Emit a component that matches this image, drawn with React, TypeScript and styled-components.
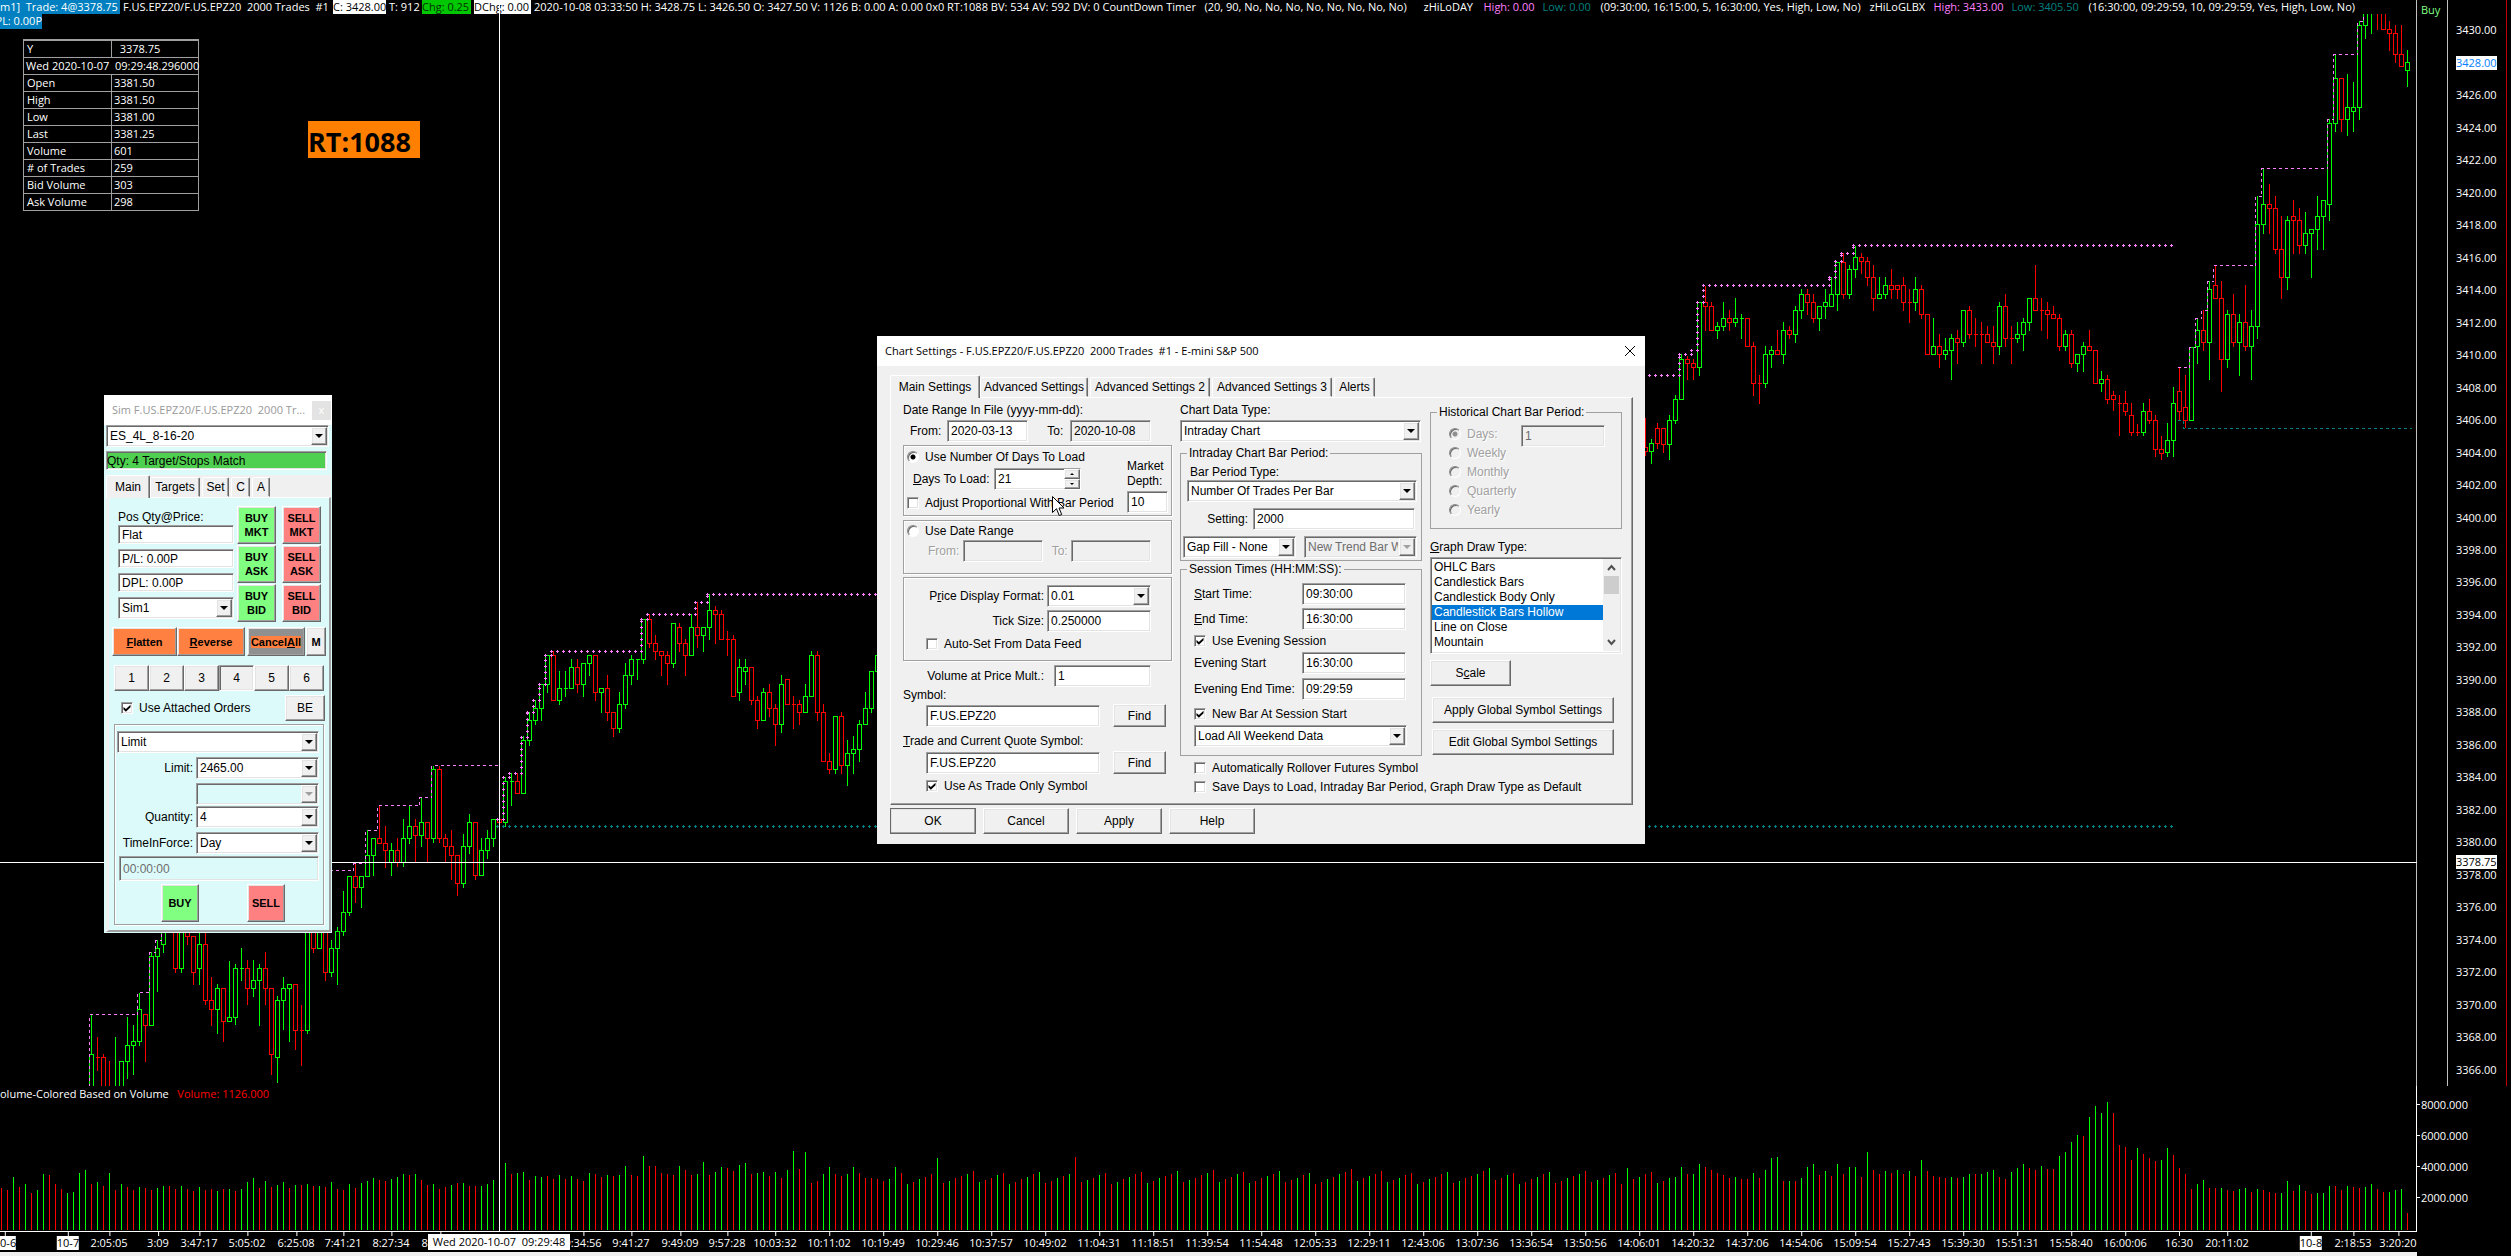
import React from "react";
import styled, { createGlobalStyle, css } from "styled-components";

const UI = `"Liberation Sans", Arial, sans-serif`;
const CHART = `"Open Sans", "Noto Sans", sans-serif`;

const GlobalStyle = createGlobalStyle`
  * { box-sizing: border-box; }
  body { margin: 0; background: #000; overflow: hidden; }
  button, input, select { font: inherit; color: inherit; margin: 0; border-radius: 0; }
`;

/* ---------- chart data ---------- */

const FIRST_X = 499;
const BAR = 6;
const xOf = (n: number) => FIRST_X + n * BAR;

type Segment = { start: number; y0: number; scale: number; rows: string };

/* direction, high, body top, body bottom, low */
const segments: Segment[] = [
  {
    start: -68, y0: 700, scale: 2.82,
    rows: `g 885 997 1110 1110|r 950 1008 1008 1042|r 997 1008 1110 1110|r 1018 1110 1110 1110|g 950 1110 1110 1110|g 1018 1018 1110 1110|g 895 974 1018 1066|g 917 962 974 1055|g 825 872 962 972|r 885 885 917 1018|g 712 723 917 917|g 678 700 723 822|g 640 640 689 712|g 500 520 640 650|r 500 600 757 768|g 600 630 757 766|r 600 620 665 688|r 665 665 768 800|g 640 689 757 800|r 640 689 847 858|r 780 847 872 917|g 800 813 872 938|r 813 813 906 961|g 735 895 906 906|g 745 757 895 915|g 700 757 757 790|r 733 757 813 858|g 733 790 813 835|g 745 757 790 917|r 712 757 813 858|r 813 813 997 1055|g 835 847 1008 1077|g 780 813 847 927|g 802 802 813 961|r 802 802 930 984|r 860 930 930 1028|g 620 630 930 938|r 600 600 700 710|g 600 640 700 700|r 600 620 768 790|g 678 700 768 778|g 640 652 700 800|g 540 597 652 662|g 495 495 597 606|r 460 495 528 570|g 495 495 528 583|g 368 436 495 495|g 390 390 436 494|r 297 390 402 402|r 355 402 424 470|g 402 424 458 494|r 390 424 458 468|g 335 390 458 468|g 297 356 390 402|r 335 356 380 458|g 275 345 380 412|r 345 345 390 458|g 185 195 390 400|r 185 195 390 400|r 378 390 413 456|r 366 413 436 504|r 436 436 517 550|g 378 413 517 526|g 321 345 413 432|r 345 345 494 504|g 390 424 494 494|g 366 390 424 446|g 335 335 390 412`,
  },
  {
    start: 0, y0: 580, scale: 3,
    rows: `r 716 716 727 727|g 592 604 727 738|g 580 604 604 674|r 580 604 640 640|g 468 481 640 640|g 397 421 481 494|g 361 385 421 431|g 313 313 385 420|g 226 226 313 336|r 214 226 361 361|g 273 325 361 372|g 273 325 325 348|g 237 262 325 325|r 237 262 313 336|g 250 250 313 348|g 226 226 250 285|r 226 226 337 360|g 325 325 337 396|r 285 325 397 420|r 397 397 445 468|g 336 373 445 456|g 249 286 373 384|g 225 238 286 312|g 238 238 238 297|g 118 118 238 249|r 102 118 190 201|r 165 190 214 237|r 214 214 226 285|r 213 226 250 312|g 130 130 250 261|r 129 142 190 213|r 177 190 226 285|g 103 142 226 226|r 67 142 166 201|g 142 142 166 213|g 42 91 142 177|r 78 91 103 189|r 90 103 178 178|r 153 178 178 225|r 165 178 349 349|g 237 262 337 360|g 237 262 274 312|r 262 262 361 372|r 348 361 421 444|g 324 337 421 421|r 312 337 385 408|r 372 385 433 495|g 285 313 433 456|r 298 298 373 373|r 348 373 373 444|r 360 373 397 432|g 312 349 397 397|g 213 226 349 349|r 213 226 397 420|r 372 397 544 544|r 519 544 568 579|g 409 409 568 579|r 396 409 556 579|g 480 520 556 615|g 468 508 520 579|g 420 433 508 543|g 336 385 433 433|g 274 274 385 396|g 226 226 274 274`,
  },
  {
    start: 191, y0: 0, scale: 3,
    rows: `r 1255 1340 1354 1364|g 1318 1330 1354 1390|r 1270 1285 1330 1345|r 1285 1285 1333 1356|g 1244 1261 1333 1378|g 1186 1198 1261 1270|g 1063 1078 1198 1198|r 1068 1078 1090 1137|r 1078 1090 1102 1137|g 907 907 1102 1125|r 857 907 919 990|r 907 919 991 991|g 967 979 991 1014|g 907 955 979 990|r 930 955 967 990|g 893 955 967 978|g 942 955 955 1014|r 955 955 1039 1039|r 1026 1039 1150 1185|r 1125 1150 1150 1209|g 1038 1063 1150 1161|g 1038 1051 1063 1102|r 990 1051 1063 1063|g 966 991 1063 1089|r 979 991 1003 1014|g 919 931 1003 1026|g 867 883 931 954|r 867 883 907 942|r 883 907 955 966|g 919 919 955 990|g 867 907 919 954|g 832 883 919 919|g 785 785 883 930|r 760 785 883 893|g 795 808 883 893|g 737 772 808 832|r 758 772 784 820|r 772 784 832 856|r 795 832 895 930|g 832 883 895 895|g 832 856 883 893|r 807 856 868 893|r 856 856 868 893|r 832 856 907 930|r 867 907 907 966|g 832 868 907 930|r 855 868 943 954|r 943 943 1063 1063|g 954 1039 1063 1063|r 1002 1039 1063 1101|g 1014 1051 1063 1077|g 1002 1015 1051 1137|r 990 1015 1027 1089|g 931 931 1027 1038|r 918 931 1003 1014|r 954 1003 1003 1038|r 966 1003 1003 1089|r 978 1003 1027 1027|r 978 1027 1039 1089|g 907 919 1039 1062|r 882 919 1015 1038|r 978 1015 1015 1089|g 966 1003 1015 1026|g 955 967 1003 1050|g 895 895 967 990|r 795 895 931 931|r 895 931 931 990|r 907 931 943 1014|r 919 943 955 955|r 942 955 1039 1050|g 990 1003 1039 1050|r 990 1003 1090 1101|g 1063 1063 1090 1113|g 1026 1039 1063 1113|r 990 1039 1051 1051|r 1051 1051 1150 1150|g 1113 1138 1150 1173|r 1125 1138 1198 1209|r 1173 1186 1198 1231|r 1185 1210 1210 1306|r 1173 1210 1234 1244|r 1209 1246 1297 1306|r 1272 1297 1297 1306|g 1209 1233 1297 1306|r 1197 1233 1260 1269|r 1244 1260 1346 1369|r 1308 1346 1359 1377|g 1270 1321 1357 1369|g 1161 1210 1321 1367|r 1103 1174 1234 1259|r 1125 1222 1260 1282|g 1040 1040 1260 1260|g 955 991 1039 1089|r 931 991 1027 1050|g 844 868 1027 1137|r 797 856 895 895|r 844 895 1078 1173|g 930 943 1078 1101|r 882 943 1027 1038|g 942 967 1027 1125|r 855 967 1039 1050|g 930 979 1039 1137|g 588 673 979 1014|g 505 613 673 698|r 552 613 625 698|r 588 625 748 758|r 649 748 832 893|g 648 661 832 867|r 600 649 661 758|r 625 661 736 758|g 637 700 736 758|g 688 688 700 830|g 588 649 688 747|g 600 601 649 747|g 357 370 613 660|g 163 235 370 393|r 235 235 358 393|g 222 322 358 405|g 246 322 334 393|g 64 76 322 357|g 40 40 76 113|g 30 30 36 98|r 30 30 36 87|r 30 30 88 88|r 63 88 100 150|r 75 100 163 186|r 75 163 199 199|g 150 187 211 258`,
  },
];

const paths = (() => {
  const out: Record<string, string> = { g: "", r: "" };
  segments.forEach(({ start, y0, scale, rows }) =>
    rows.split("|").forEach((row, i) => {
      const [dir, ...v] = row.split(" ");
      const [hi, top, bottom, low] = v.map((n) => Math.round(y0 + Number(n) / scale));
      const x = xOf(start + i);
      out[dir] += `M${x + 0.5} ${hi}V${top}M${x + 0.5} ${bottom}V${low + 1}`;
      out[dir] += `M${x - 1.5} ${top + 0.5}H${x + 2.5}V${bottom + 0.5}H${x - 1.5}Z`;
    })
  );
  return out;
})();

type Step = [number, number];
const dayHigh: Step[] = [
  [0, 819], [1, 777], [2, 773], [4, 737], [5, 712], [6, 700], [7, 684], [8, 655], [9, 651],
  [24, 619], [25, 614], [33, 602], [35, 594], [100, 500], [150, 375], [197, 354], [199, 350],
  [200, 302], [201, 285], [222, 277], [223, 261], [224, 253], [226, 245], [279, 245],
];
const dayLow: Step[] = [[0, 826], [279, 826]];
const nightHighLeft: Step[] = [
  [-68, 1086], [-68, 1014], [-60, 992], [-58, 952], [-57, 940], [-56, 900], [-50, 870],
  [-24, 863], [-22, 830], [-20, 805], [-13, 797], [-11, 765], [0, 765],
];
const nightHighRight: Step[] = [
  [280, 367], [282, 347], [283, 318], [284, 310], [285, 281], [286, 265], [293, 196],
  [294, 168], [305, 119], [306, 54], [310, 21], [311, 14],
];
const nightLow: Step[] = [[280, 420], [281, 428], [319, 428]];

const stairs = (steps: Step[]) =>
  steps.map(([n, y], i) => `${i ? "H" : "M"}${xOf(n) - 1.5}${i ? "V" : " "}${y + 0.5}`).join("");

const crosses = (steps: Step[]) => {
  let d = "";
  const add = (x: number, y: number) => {
    d += `M${x - 1} ${y + 0.5}h3M${x + 0.5} ${y - 1}v3`;
  };
  steps.forEach(([n, y], i) => {
    add(xOf(n) - 2, y);
    const next = steps[i + 1];
    if (!next) return;
    for (let k = n + 1; k <= next[0]; k++) add(xOf(k) - 2, y);
    for (let v = y - BAR; v > next[1]; v -= BAR) add(xOf(next[0]) - 2, v);
  });
  return d;
};

const volLeft = "r1377 r1382 g1345 r1373 g1365 r1390 g1382 g1337 r1340 r1365 r1380 g1390 g1388 g1334 g1326 r1366 g1359 r1371 g1334 r1382 g1364 r1373 r1382 g1373 r1376 r1382 g1376 g1371 r1372 r1378 g1371 r1380 r1385 g1373 r1382 r1379 g1385 r1380 g1379 r1385 g1380 g1359 g1348 r1376 g1356 r1373 g1368 g1359 r1376 g1368 r1368 g1366 r1371 g1371 r1373 g1359 r1380 r1382 g1365 r1377 g1362 g1356 g1348 r1354 r1356 g1351 g1345 g1337 r1340 g1338 r1354 r1368 g1365 r1380 r1373 g1368 r1362 g1362 r1371 r1371 g1371 g1366 g1354 r1354 g1306 r1337 g1334 g1331 r1354 g1342 g1345 r1342 r1351 g1340 r1351 g1342 r1351 r1356 g1334 r1337 r1345 g1340 r1342 g1340 g1314 r1340 r1342 g1286 r1314 r1314 r1334 r1337 r1340 g1314 r1325 r1340 g1337 g1303 r1340 g1331 g1317 r1320 r1328 g1312 g1306 r1337 g1334 g1331 r1342 g1331 r1348 g1325 g1272 r1323 g1275 r1362 r1356 g1337 g1317 r1337 r1342 g1337 g1317 r1334 r1348 r1348 r1351 r1356 g1351 g1317".split(" ");
const volRight = "r1430 g1423 g1421 g1403 r1417 g1416 g1399 r1403 r1409 r1414 r1418 r1423 g1421 r1425 r1425 g1414 r1423 g1409 g1388 g1385 r1430 g1429 r1429 g1423 g1403 g1399 r1418 g1410 r1420 g1399 r1416 g1403 g1403 r1421 g1376 r1409 r1416 g1410 r1414 g1409 r1416 g1410 r1420 g1390 r1410 r1420 r1421 r1423 g1421 r1423 g1421 g1416 r1416 g1416 g1412 g1409 r1421 r1425 g1412 g1405 g1398 r1405 r1409 g1401 r1408 r1407 g1383 g1377 g1357 g1345 r1346 g1312 g1291 g1304 g1284 r1304 r1363 r1367 r1390 g1368 r1379 r1388 r1392 g1390 g1368 r1381 r1405 r1416 r1443 g1434 g1427 r1442 r1442 g1442 r1445 r1447 g1443 g1442 r1449 g1443 r1445 r1449 r1451 g1451 g1429 r1447 g1436 r1447 r1453 g1451 g1451 g1438 r1438 r1445 g1438 r1440 r1442 g1440 g1434 r1443 r1449 g1449 g1445 g1443 r1487".split(" ");

const volume = (() => {
  const out: Record<string, string> = { g: "", r: "" };
  const put = (dir: string, n: number, h: number) => {
    out[dir] += `M${xOf(n) + 0.5} 144v${-Math.round(h)}`;
  };
  volLeft.forEach((s, i) => put(s[0], i - 83, (1495 - Number(s.slice(1))) / 2.82));
  for (let n = -83 + volLeft.length; n < 194; n++) {
    const wave = (n * 37) % 17;
    const spike = n % 23 === 4 ? 14 : 0;
    put((n * 7) % 5 < 2 ? "g" : "r", n, 46 + wave * 0.8 + spike);
  }
  volRight.forEach((s, i) => put(s[0], 194 + i, (1519 - Number(s.slice(1))) / 1.832));
  return out;
})();

const PLOT_W = 2417;
const times: [number, string, boolean?][] = [
  [5, "10-6", true], [68, "10-7", true], [109, "2:05:05"], [158, "3:09"], [199, "3:47:17"],
  [247, "5:05:02"], [296, "6:25:08"], [343, "7:41:21"], [391, "8:27:34"], [440, "8:59:12"],
  [583, "9:34:56"], [631, "9:41:27"], [680, "9:49:09"], [727, "9:57:28"],
  [775, "10:03:32"], [829, "10:11:02"], [883, "10:19:49"], [937, "10:29:46"],
  [991, "10:37:57"], [1045, "10:49:02"], [1099, "11:04:31"], [1153, "11:18:51"],
  [1207, "11:39:54"], [1261, "11:54:48"], [1315, "12:05:33"], [1369, "12:29:11"],
  [1423, "12:43:06"], [1477, "13:07:36"], [1531, "13:36:54"], [1585, "13:50:56"],
  [1639, "14:06:01"], [1693, "14:20:32"], [1747, "14:37:06"], [1801, "14:54:06"],
  [1855, "15:09:54"], [1909, "15:27:43"], [1963, "15:39:30"], [2017, "15:51:31"],
  [2071, "15:58:40"], [2125, "16:00:06"], [2179, "16:30"], [2227, "20:11:02"],
  [2311, "10-8", true], [2353, "2:18:53"], [2398, "3:20:20"],
];

const prices = Array.from({ length: 33 }, (_, i) => 3430 - i * 2);

/* ---------- chart layout ---------- */

const Desktop = styled.main`
  position: relative;
  display: grid;
  grid-template-columns: minmax(0, 1fr) 31px 63px;
  grid-template-rows: minmax(0, 1fr) 145px 25px;
  height: 100vh;
  background: #000;
  color: #fff;
  font: 11px/14px ${CHART};
  overflow: hidden;
`;
const PricePane = styled.section`
  display: flex;
  flex-direction: column;
  min-width: 0;
  min-height: 0;
  border-right: 1px solid #c0c0c0;
`;
const Plot = styled.svg`
  display: block;
  width: 100%;
  height: 0;
  flex: 1;
  shape-rendering: crispEdges;
  fill: none;
`;
const VolumePlot = styled(Plot)`
  height: 100%;
`;
const StatusBar = styled.header`
  display: flex;
  gap: 3px;
  height: 14px;
  overflow: hidden;
  white-space: pre;
`;
const Tag = styled.span<{ $bg?: string; $fg?: string; $w?: number }>`
  flex: none;
  background: ${(p) => p.$bg || "transparent"};
  color: ${(p) => p.$fg || "#fff"};
  ${(p) => p.$w && `width: ${p.$w}px;`}
`;
const Profit = styled.div`
  position: absolute;
  top: 14px;
  left: 0;
  width: 42px;
  height: 15px;
  overflow: hidden;
  background: #0080c0;
  direction: rtl;
  white-space: nowrap;
`;
const BuyColumn = styled.div`
  padding: 3px 4px;
  border-right: 1px solid #c0c0c0;
  color: #80ff80;
`;
const PriceScale = styled.ol`
  display: flex;
  flex-direction: column;
  margin: 0 4px 0 0;
  padding: 14px 0 0 8px;
  border-right: 1px solid #c00000;
  list-style: none;
`;
const Price = styled.li<{ $last?: boolean }>`
  display: flex;
  flex: 1;
  align-items: center;
  span {
    background: ${(p) => (p.$last ? "#fff" : "transparent")};
    color: ${(p) => (p.$last ? "#0080ff" : "#fff")};
  }
`;
const VolumePane = styled.section`
  position: relative;
  display: flex;
  min-width: 0;
  border-right: 1px solid #fff;
`;
const VolumeTitle = styled.div`
  position: absolute;
  top: 1px;
  left: 0;
  white-space: pre;
  span { color: #f00; }
`;
const VolumeScale = styled.ol`
  grid-column: 2 / 4;
  margin: 0;
  padding: 3px 0 0;
  list-style: none;
  li { display: flex; align-items: center; height: 31px; }
  li::before { content: ""; width: 3px; height: 1px; margin-right: 1px; background: #fff; }
`;
const TimeAxis = styled.div`
  position: relative;
  grid-column: 1;
  overflow: hidden;
  border-top: 1px solid #fff;
  border-bottom: 4px solid #f0f0f0;
`;
const Time = styled.span<{ $day?: boolean }>`
  position: absolute;
  top: 4px;
  transform: translateX(-50%);
  white-space: nowrap;
  background: ${(p) => (p.$day ? "#fff" : "transparent")};
  color: ${(p) => (p.$day ? "#000" : "#fff")};
  &::before {
    content: "";
    position: absolute;
    left: 50%;
    top: -4px;
    width: 1px;
    height: 4px;
    background: #fff;
  }
`;
const CursorTime = styled.div`
  position: absolute;
  left: 428px;
  bottom: 6px;
  width: 142px;
  height: 16px;
  line-height: 16px;
  text-align: center;
  white-space: pre;
  background: #fff;
  color: #000;
`;
const CursorPrice = styled.div`
  position: absolute;
  left: calc(100% - 55px);
  top: 855px;
  background: #fff;
  color: #000;
`;
const CrossV = styled.div`
  position: absolute;
  left: 499px;
  top: 0;
  bottom: 24px;
  width: 1px;
  background: #fff;
`;
const CrossH = styled.div`
  position: absolute;
  left: 0;
  right: 94px;
  top: 862px;
  height: 1px;
  background: #fff;
`;
const DataTable = styled.table`
  position: absolute;
  left: 23px;
  top: 39px;
  width: 176px;
  table-layout: fixed;
  border-collapse: collapse;
  border: 1px solid #fff;
  border-top: 2px solid #a0a0a0;
  td, th {
    height: 17px;
    padding: 0 2px;
    border: 1px solid #a0a0a0;
    font-weight: 400;
    text-align: left;
    white-space: pre;
    line-height: 14px;
  }
  td[colspan] { padding-right: 0; }
  th { width: 88px; padding-left: 3px; }
`;
const RtBadge = styled.div`
  position: absolute;
  left: 308px;
  top: 121px;
  width: 112px;
  height: 37px;
  background: #ff8000;
  color: #000;
  font-size: 27px;
  font-weight: 700;
  line-height: 41px;
`;

/* ---------- classic window controls ---------- */

const sunken = css`
  border: 1px solid;
  border-color: #a0a0a0 #fff #fff #a0a0a0;
  box-shadow: inset 1px 1px #696969, inset -1px -1px #e3e3e3;
`;
const raised = css`
  border: 1px solid;
  border-color: #fff #696969 #696969 #fff;
  box-shadow: inset -1px -1px #a0a0a0, inset 1px 1px #e3e3e3;
`;
const etched = css`
  border: 1px solid #a0a0a0;
  box-shadow: 1px 1px 0 #fff, inset 1px 1px 0 #fff;
`;

const Box = styled.input<{ $w: number; $h?: number }>`
  ${sunken}
  flex: none;
  display: block;
  width: ${(p) => p.$w}px;
  height: ${(p) => p.$h || 22}px;
  padding: 0 3px;
  background: #fff;
  color: #000;
  outline: none;
  &:disabled, &:read-only { background: transparent; }
  &:disabled { color: #6d6d6d; }
`;
const ComboWrap = styled.span<{ $w: number; $off?: boolean }>`
  ${sunken}
  position: relative;
  flex: none;
  display: block;
  width: ${(p) => p.$w}px;
  height: 22px;
  background: ${(p) => (p.$off ? "transparent" : "#fff")};
  select {
    appearance: none;
    display: block;
    width: calc(100% - 18px);
    height: 20px;
    padding: 0 0 0 3px;
    border: 0;
    outline: none;
    background: transparent;
    color: ${(p) => (p.$off ? "#6d6d6d" : "#000")};
    opacity: 1;
    overflow: hidden;
  }
`;
const DropKnob = styled.span<{ $off?: boolean }>`
  ${raised}
  position: absolute;
  right: 1px;
  top: 1px;
  width: 16px;
  height: 18px;
  background: #f0f0f0;
  pointer-events: none;
  &::after {
    content: "";
    position: absolute;
    left: 3px;
    top: 6px;
    border: 4px solid transparent;
    border-top: 4px solid ${(p) => (p.$off ? "#a0a0a0" : "#000")};
    border-bottom: 0;
  }
`;
const Combo = ({ w, value, label, off }: { w: number; value: string; label: string; off?: boolean }) => (
  <ComboWrap $w={w} $off={off}>
    <select aria-label={label} disabled={off} defaultValue={value}>
      <option>{value}</option>
    </select>
    <DropKnob $off={off} />
  </ComboWrap>
);

const Button = styled.button<{ $w: number; $h?: number; $bg?: string; $bold?: boolean; $down?: boolean; $main?: boolean }>`
  ${raised}
  flex: none;
  display: block;
  width: ${(p) => p.$w}px;
  height: ${(p) => p.$h || 26}px;
  padding: 0;
  background: ${(p) => p.$bg || "#f0f0f0"};
  color: #000;
  white-space: nowrap;
  ${(p) => p.$bold && "font-size: 11px; font-weight: 700; line-height: 14px;"}
  ${(p) => p.$down && sunken}
  ${(p) => p.$main && "outline: 1px solid #696969; outline-offset: -1px;"}
`;
const TickLabel = styled.label<{ $off?: boolean }>`
  display: flex;
  align-items: center;
  gap: 6px;
  height: 16px;
  white-space: nowrap;
  ${(p) => p.$off && "color: #a0a0a0; text-shadow: 1px 1px #fff;"}
`;
const CheckInput = styled.input`
  ${sunken}
  appearance: none;
  position: relative;
  width: 12px;
  height: 12px;
  background: #fff;
  &:checked::after {
    content: "";
    position: absolute;
    inset: 1px;
    background: #000;
    clip-path: polygon(6% 36%, 36% 62%, 94% 8%, 94% 42%, 36% 96%, 6% 68%);
  }
`;
const RadioInput = styled.input`
  appearance: none;
  width: 12px;
  height: 12px;
  border: 1px solid;
  border-color: #8a8a8a #fff #fff #8a8a8a;
  border-radius: 50%;
  box-shadow: inset 1px 1px #696969;
  background: #fff;
  &:checked { background: radial-gradient(#000 2px, #fff 3px); }
  &:disabled { background: #f0f0f0; }
  &:disabled:checked { background: radial-gradient(#909090 2px, #f0f0f0 3px); }
`;
const Check = ({ text, on }: { text: string; on?: boolean }) => (
  <TickLabel>
    <CheckInput type="checkbox" defaultChecked={on} />
    {text}
  </TickLabel>
);
const Radio = ({ text, on, off, name }: { text: string; on?: boolean; off?: boolean; name: string }) => (
  <TickLabel $off={off}>
    <RadioInput type="radio" name={name} defaultChecked={on} disabled={off} />
    {text}
  </TickLabel>
);

const Row = styled.div<{ $mt?: number; $pl?: number; $gap?: number }>`
  display: flex;
  align-items: center;
  gap: ${(p) => p.$gap || 0}px;
  margin-top: ${(p) => p.$mt || 0}px;
  padding-left: ${(p) => p.$pl || 0}px;
`;
const Caption = styled.label<{ $w?: number; $end?: boolean; $off?: boolean }>`
  flex: none;
  display: block;
  line-height: 16px;
  white-space: nowrap;
  ${(p) => p.$w && `width: ${p.$w}px;`}
  ${(p) => p.$end && "text-align: right;"}
  ${(p) => p.$off && "color: #a0a0a0; text-shadow: 1px 1px #fff;"}
`;
const Group = styled.div<{ $h: number; $mt?: number; $pt?: number }>`
  ${etched}
  height: ${(p) => p.$h}px;
  margin-top: ${(p) => p.$mt || 0}px;
  padding-top: ${(p) => p.$pt || 0}px;
`;
const FieldSet = styled.fieldset<{ $h: number; $mt: number }>`
  min-width: 0;
  height: ${(p) => p.$h}px;
  margin: ${(p) => p.$mt}px 0 0;
  padding: 0;
  border: 1px solid #a0a0a0;
  legend { margin-left: 6px; padding: 0 2px; line-height: 16px; }
`;
const Tabs = styled.div`
  display: flex;
  align-items: flex-end;
  gap: 2px;
`;
const Tab = styled.button<{ $w: number; $active?: boolean }>`
  width: ${(p) => p.$w}px;
  height: 20px;
  padding: 0;
  border: 1px solid;
  border-color: #fff #696969 transparent #fff;
  border-radius: 2px 2px 0 0;
  box-shadow: inset -1px 0 #a0a0a0;
  background: #f0f0f0;
  white-space: nowrap;
  ${(p) => p.$active && "position: relative; margin-bottom: -1px; margin-right: -2px; height: 23px; border-bottom: 0;"}
`;

/* ---------- chart settings dialog ---------- */

const Dialog = styled.section`
  position: absolute;
  left: 877px;
  top: 336px;
  width: 768px;
  background: #f0f0f0;
  color: #000;
  font: 12px/16px ${UI};
`;
const DialogTitle = styled.header`
  display: flex;
  align-items: center;
  justify-content: space-between;
  height: 30px;
  padding: 0 8px;
  background: #fff;
  font: 11px/16px ${CHART};
  white-space: pre;
`;
const CloseButton = styled.button`
  display: flex;
  padding: 0;
  border: 0;
  background: none;
`;
const DialogBody = styled.div`
  padding: 9px 12px 10px 13px;
`;
const TabPanel = styled.div`
  display: grid;
  grid-template-columns: 269px 242px 192px;
  column-gap: 8px;
  height: 408px;
  padding: 4px 9px 0 12px;
  border: 1px solid;
  border-color: #fff #696969 #696969 #fff;
  box-shadow: inset -1px -1px #a0a0a0;
`;
const Column = styled.div`
  min-width: 0;
`;
const Split = styled.div`
  display: flex;
`;
const DaysBlock = styled.div`
  width: 223px;
  padding-left: 3px;
`;
const Depth = styled.label`
  padding-top: 10px;
  line-height: 15px;
  input { margin-top: 2px; }
`;
const Spin = styled.span`
  position: relative;
  display: block;
`;
const SpinKnobs = styled.span`
  position: absolute;
  right: 1px;
  top: 1px;
  display: grid;
`;
const SpinButton = styled.button<{ $down?: boolean }>`
  ${raised}
  position: relative;
  width: 16px;
  height: 10px;
  padding: 0;
  background: #f0f0f0;
  &::after {
    content: "";
    position: absolute;
    left: 5px;
    top: 3px;
    border: 2px solid transparent;
    ${(p) => (p.$down ? "border-top-color: #000; border-bottom: 0;" : "border-bottom-color: #000; border-top: 0;")}
  }
`;
const ListFrame = styled.div`
  ${sunken}
  display: flex;
  height: 97px;
  margin-top: 2px;
  padding: 1px 1px 2px 1px;
  background: #fff;
  select {
    flex: 1;
    height: 93px;
    padding: 1px 0 0;
    border: 0;
    outline: 0;
    overflow: hidden;
    background: #fff;
    scrollbar-width: none;
  }
  option { min-height: 0; height: 15px; padding: 0 2px; line-height: 15px; }
  option:checked { background: #0078d7 linear-gradient(#0078d7, #0078d7); color: #fff; }
`;
const ScrollTrack = styled.div`
  display: flex;
  flex-direction: column;
  align-items: center;
  width: 17px;
  background: #f0f0f0;
  svg { height: 17px; }
  svg:last-child { margin-top: auto; }
  i { width: 15px; height: 18px; background: #cdcdcd; }
`;
const History = styled.div`
  display: flex;
  justify-content: space-between;
  padding: 5px 16px 0 18px;
`;
const RadioStack = styled.div`
  display: grid;
  gap: 3px;
  padding-top: 1px;
`;
const Pointer = styled.svg`
  position: absolute;
  left: 175px;
  top: 160px;
`;

/* ---------- trade window ---------- */

const CYAN = "#dcfafa";
const TradeWindow = styled.section`
  position: absolute;
  left: 104px;
  top: 395px;
  width: 228px;
  background: ${CYAN};
  color: #000;
  font: 12px/16px ${UI};
`;
const TradeTitle = styled.header`
  display: flex;
  align-items: center;
  justify-content: space-between;
  height: 30px;
  padding: 0 1px 0 8px;
  background: #fff;
  color: #999;
  font: 11px/16px ${CHART};
  white-space: pre;
  button {
    width: 19px;
    height: 19px;
    padding: 0;
    border: 0;
    background: #e3e3e3;
    color: #fff;
  }
`;
const TradeBody = styled.div`
  padding: 0 1px 1px 2px;
`;
const MatchBar = styled.div`
  ${sunken}
  width: 221px;
  height: 19px;
  margin: 4px 0 5px;
  background: #50d050;
  line-height: 18px;
`;
const TabStrip = styled(Tabs)`
  height: 22px;
  background: #f0f0f0;
`;
const TradePanel = styled.div`
  padding: 8px 0 5px 3px;
  border: solid;
  border-width: 1px 2px 2px 3px;
  border-color: #fff #a0a0a0 #a0a0a0 #f0f0f0;
`;
const Quotes = styled.div`
  display: grid;
  grid-template-columns: 116px 39px 39px;
  column-gap: 3px;
  padding: 0 0 0 6px;
`;
const QuoteFields = styled.div`
  display: grid;
  align-content: start;
  gap: 5px;
  padding-top: 3px;
  > label { margin-bottom: -5px; }
`;
const ButtonStack = styled.div<{ $pl?: number }>`
  display: grid;
  gap: 1px;
  padding-left: ${(p) => p.$pl || 0}px;
  align-content: start;
`;
const Spread = styled.div`
  display: flex;
  align-items: center;
  justify-content: space-between;
  width: 213px;
  margin: 4px 0 3px;
  padding-left: 9px;
`;
const OrderBox = styled(Group)`
  width: 210px;
  margin-left: 2px;
`;

const GREEN = "#80ff80";
const PINK = "#ff8080";
const ORANGE = "#ff8040";

const quotes = [
  ["Y", "  3378.75"],
  null,
  ["Open", "3381.50"],
  ["High", "3381.50"],
  ["Low", "3381.00"],
  ["Last", "3381.25"],
  ["Volume", "601"],
  ["# of Trades", "259"],
  ["Bid Volume", "303"],
  ["Ask Volume", "298"],
];

function Chart() {
  return (
    <>
      <PricePane>
        <StatusBar>
          <Tag $bg="#0080c0" $w={120}>{"m1]  Trade: 4@3378.75"}</Tag>
          <Tag $w={207}>{"F.US.EPZ20/F.US.EPZ20  2000 Trades  #1"}</Tag>
          <Tag $bg="#fff" $fg="#000" $w={53}>C: 3428.00</Tag>
          <Tag $w={30}>T: 912</Tag>
          <Tag $bg="#00c800" $fg="#003000" $w={49}>Chg: 0.25</Tag>
          <Tag $bg="#fff" $fg="#000" $w={57}>DChg: 0.00</Tag>
          <Tag>
            2020-10-08 03:33:50 H: 3428.75 L: 3426.50 O: 3427.50 V: 1126 B: 0.00 A: 0.00 0x0 RT:1088 BV: 534 AV: 592 DV: 0
          </Tag>
          <Tag $w={99}>CountDown Timer</Tag>
          <Tag $w={216}>(20, 90, No, No, No, No, No, No, No, No)</Tag>
          <Tag $w={57}>zHiLoDAY</Tag>
          <Tag $fg="#ff80ff" $w={56}>High: 0.00</Tag>
          <Tag $fg="#008080" $w={55}>Low: 0.00</Tag>
          <Tag $w={266}>(09:30:00, 16:15:00, 5, 16:30:00, Yes, High, Low, No)</Tag>
          <Tag $w={61}>zHiLoGLBX</Tag>
          <Tag $fg="#ff80ff" $w={75}>High: 3433.00</Tag>
          <Tag $fg="#008080" $w={74}>Low: 3405.50</Tag>
          <Tag>(16:30:00, 09:29:59, 10, 09:29:59, Yes, High, Low, No)</Tag>
        </StatusBar>
        <Plot viewBox="0 14 2416 1072" preserveAspectRatio="none" aria-label="Price chart">
          <path d={paths.r} stroke="#f00" />
          <path d={paths.g} stroke="#0f0" />
          <path d={stairs(nightHighLeft)} stroke="#ff80ff" strokeDasharray="3 3" />
          <path d={stairs(nightHighRight)} stroke="#ff80ff" strokeDasharray="3 3" />
          <path d={stairs(nightLow)} stroke="#008080" strokeDasharray="3 3" />
          <path d={crosses(dayHigh)} stroke="#ff80ff" />
          <path d={crosses(dayLow)} stroke="#008080" />
        </Plot>
      </PricePane>
      <BuyColumn>Buy</BuyColumn>
      <PriceScale>
        {prices.map((p) => (
          <Price key={p} $last={p === 3428}>
            <span>{p.toFixed(2)}</span>
          </Price>
        ))}
      </PriceScale>
      <VolumePane>
        <VolumePlot viewBox="0 0 2416 145" preserveAspectRatio="none" aria-label="Volume chart">
          <path d={volume.r} stroke="#f00" />
          <path d={volume.g} stroke="#0f0" />
        </VolumePlot>
        <VolumeTitle>
          {"olume-Colored Based on Volume   "}
          <span>Volume: 1126.000</span>
        </VolumeTitle>
      </VolumePane>
      <VolumeScale>
        {[8000, 6000, 4000, 2000].map((v) => (
          <li key={v}>{v.toFixed(3)}</li>
        ))}
      </VolumeScale>
      <TimeAxis>
        {times.map(([x, text, day]) => (
          <Time key={text} $day={day} style={{ left: `${(x / PLOT_W) * 100}%` }}>
            {text}
          </Time>
        ))}
      </TimeAxis>
      <Profit>PL: 0.00P</Profit>
      <DataTable>
        <colgroup>
          <col width={88} />
          <col />
        </colgroup>
        <tbody>
          {quotes.map((q) =>
            q ? (
              <tr key={q[0]}>
                <th scope="row">{q[0]}</th>
                <td>{q[1]}</td>
              </tr>
            ) : (
              <tr key="time">
                <td colSpan={2}>{"Wed 2020-10-07  09:29:48.296000"}</td>
              </tr>
            )
          )}
        </tbody>
      </DataTable>
      <RtBadge>RT:1088</RtBadge>
      <CrossH />
      <CrossV />
      <CursorTime>{"Wed 2020-10-07  09:29:48"}</CursorTime>
      <CursorPrice>3378.75</CursorPrice>
    </>
  );
}

const Cancel = styled(Button)`
  margin: 0 1px 0 2px;
  span { background: ${ORANGE}; }
`;

function Trade() {
  return (
    <TradeWindow>
      <TradeTitle>
        {"Sim F.US.EPZ20/F.US.EPZ20  2000 Tr..."}
        <button aria-label="Close">x</button>
      </TradeTitle>
      <TradeBody>
        <Combo w={223} value="ES_4L_8-16-20" label="Trade configuration" />
        <MatchBar>Qty: 4 Target/Stops Match</MatchBar>
        <TabStrip>
          <Tab $w={44} $active>Main</Tab>
          <Tab $w={50}>Targets</Tab>
          <Tab $w={27}>Set</Tab>
          <Tab $w={19}>C</Tab>
          <Tab $w={18}>A</Tab>
        </TabStrip>
        <TradePanel>
          <Quotes>
            <QuoteFields>
              <Caption htmlFor="pos">Pos Qty@Price:</Caption>
              <Box id="pos" $w={116} $h={19} defaultValue="Flat" />
              <Box aria-label="Profit or loss" $w={116} $h={19} defaultValue="P/L: 0.00P" />
              <Box aria-label="Daily profit or loss" $w={116} $h={19} defaultValue="DPL: 0.00P" />
              <Combo w={116} value="Sim1" label="Account" />
            </QuoteFields>
            <ButtonStack>
              {["MKT", "ASK", "BID"].map((k) => (
                <Button key={k} $w={39} $h={38} $bg={GREEN} $bold>BUY<br />{k}</Button>
              ))}
            </ButtonStack>
            <ButtonStack $pl={3}>
              {["MKT", "ASK", "BID"].map((k) => (
                <Button key={k} $w={39} $h={38} $bg={PINK} $bold>SELL<br />{k}</Button>
              ))}
            </ButtonStack>
          </Quotes>
          <Row $mt={5}>
            <Button $w={65} $h={29} $bg={ORANGE} $bold><u>F</u>latten</Button>
            <Button $w={68} $h={29} $bg={ORANGE} $bold><u>R</u>everse</Button>
            <Cancel $w={58} $h={29} $bg="#909090" $bold><span>Cancel<u>A</u>ll</span></Cancel>
            <Button $w={20} $h={29} $bold>M</Button>
          </Row>
          <Row $mt={9} $pl={2}>
            {[1, 2, 3, 4, 5, 6].map((n) => (
              <Button key={n} $w={35} $down={n === 4}>{n}</Button>
            ))}
          </Row>
          <Spread>
            <Check text="Use Attached Orders" on />
            <Button $w={40}>BE</Button>
          </Spread>
          <OrderBox $h={201} $pt={6}>
            <Row $pl={2}><Combo w={202} value="Limit" label="Order type" /></Row>
            <Row $mt={4} $gap={3}><Caption $w={78} $end>Limit:</Caption><Combo w={123} value="2465.00" label="Limit" /></Row>
            <Row $mt={4} $gap={3}><Caption $w={78} /><Combo w={123} value="" label="Stop" off /></Row>
            <Row $mt={1} $gap={3}><Caption $w={78} $end>Quantity:</Caption><Combo w={123} value="4" label="Quantity" /></Row>
            <Row $mt={4} $gap={3}><Caption $w={78} $end>TimeInForce:</Caption><Combo w={123} value="Day" label="Time in force" /></Row>
            <Row $mt={2} $pl={4}><Box aria-label="Time" $w={200} $h={25} disabled defaultValue="00:00:00" /></Row>
            <Row $mt={3} $pl={46} $gap={48}>
              <Button $w={38} $h={38} $bg={GREEN} $bold>BUY</Button>
              <Button $w={38} $h={38} $bg={PINK} $bold>SELL</Button>
            </Row>
          </OrderBox>
        </TradePanel>
      </TradeBody>
    </TradeWindow>
  );
}

function Settings() {
  return (
    <Dialog role="dialog" aria-label="Chart Settings">
      <DialogTitle>
        {"Chart Settings - F.US.EPZ20/F.US.EPZ20  2000 Trades  #1 - E-mini S&P 500"}
        <CloseButton aria-label="Close">
          <svg width="14" height="12" viewBox="0 0 14 12" stroke="#000" fill="none">
            <path d="M2 1l10 10M12 1L2 11" />
          </svg>
        </CloseButton>
      </DialogTitle>
      <DialogBody>
        <Tabs>
          <Tab $w={90} $active>Main Settings</Tab>
          <Tab $w={108}>Advanced Settings</Tab>
          <Tab $w={120}>Advanced Settings 2</Tab>
          <Tab $w={120}>Advanced Settings 3</Tab>
          <Tab $w={41}>Alerts</Tab>
        </Tabs>
        <TabPanel>
          <Column>
            <Caption>Date Range In File (yyyy-mm-dd):</Caption>
            <Row $mt={2} $pl={7}>
              <Caption $w={37} htmlFor="from">From:</Caption>
              <Box id="from" $w={81} defaultValue="2020-03-13" />
              <Caption $w={42} $end htmlFor="to">To:&nbsp;&nbsp;</Caption>
              <Box id="to" $w={81} defaultValue="2020-10-08" readOnly />
            </Row>
            <Group $h={71} $mt={3} $pt={3}>
              <Split>
                <DaysBlock>
                  <Radio name="range" text="Use Number Of Days To Load" on />
                  <Row $mt={3} $pl={6} $gap={3}>
                    <Caption $w={78} htmlFor="days"><u>D</u>ays To Load:</Caption>
                    <Spin>
                      <Box id="days" $w={87} defaultValue="21" />
                      <SpinKnobs>
                        <SpinButton aria-label="More days" />
                        <SpinButton aria-label="Fewer days" $down />
                      </SpinKnobs>
                    </Spin>
                  </Row>
                  <Row $mt={5}><Check text="Adjust Proportional With Bar Period" /></Row>
                </DaysBlock>
                <Depth>
                  Market<br />Depth:
                  <Box $w={41} defaultValue="10" />
                </Depth>
              </Split>
            </Group>
            <Group $h={54} $mt={4} $pt={2}>
              <Row $pl={3}><Radio name="range" text="Use Date Range" /></Row>
              <Row $mt={1} $pl={24}>
                <Caption $w={35} $off htmlFor="from2">From:</Caption>
                <Box id="from2" $w={80} disabled />
                <Caption $w={28} $off $end htmlFor="to2">To:&nbsp;</Caption>
                <Box id="to2" $w={80} disabled />
              </Row>
            </Group>
            <Group $h={84} $mt={3} $pt={7}>
              <Row $gap={3}>
                <Caption $w={140} $end>P<u>r</u>ice Display Format:</Caption>
                <Combo w={104} value="0.01" label="Price Display Format" />
              </Row>
              <Row $mt={3} $gap={3}>
                <Caption $w={140} $end htmlFor="tick">Tick Size:</Caption>
                <Box id="tick" $w={104} defaultValue="0.250000" />
              </Row>
              <Row $mt={4} $pl={22}><Check text="Auto-Set From Data Feed" /></Row>
            </Group>
            <Row $mt={4} $gap={10}>
              <Caption $w={141} $end htmlFor="mult">Volume at Price Mult.:</Caption>
              <Box id="mult" $w={97} defaultValue="1" />
            </Row>
            <Caption htmlFor="symbol">Symbol:</Caption>
            <Row $mt={1} $pl={23} $gap={13}>
              <Box id="symbol" $w={174} defaultValue="F.US.EPZ20" />
              <Button $w={53} $h={23}>Find</Button>
            </Row>
            <Row $mt={6}><Caption htmlFor="quote"><u>T</u>rade and Current Quote Symbol:</Caption></Row>
            <Row $mt={2} $pl={23} $gap={13}>
              <Box id="quote" $w={174} defaultValue="F.US.EPZ20" />
              <Button $w={53} $h={23}>Find</Button>
            </Row>
            <Row $mt={4} $pl={23}><Check text="Use As Trade Only Symbol" on /></Row>
          </Column>

          <Column>
            <Caption>Chart Data Type:</Caption>
            <Row $mt={2}><Combo w={241} value="Intraday Chart" label="Chart Data Type" /></Row>
            <FieldSet $h={116} $mt={3}>
              <legend>Intraday Chart Bar Period:</legend>
              <Row $mt={3} $pl={9}><Caption>Bar Period Type:</Caption></Row>
              <Row $pl={6}><Combo w={230} value="Number Of Trades Per Bar" label="Bar Period Type" /></Row>
              <Row $mt={6} $gap={5}>
                <Caption $w={67} $end htmlFor="setting">Setting:</Caption>
                <Box id="setting" $w={162} defaultValue="2000" />
              </Row>
              <Row $mt={6} $pl={2} $gap={8}>
                <Combo w={113} value="Gap Fill - None" label="Gap Fill" />
                <Combo w={113} value="New Trend Bar When" label="Trend bar" off />
              </Row>
            </FieldSet>
            <FieldSet $h={195} $mt={0}>
              <legend>Session Times (HH:MM:SS):</legend>
              <Row $mt={6} $pl={13}><Caption $w={108} htmlFor="st"><u>S</u>tart Time:</Caption><Box id="st" $w={104} defaultValue="09:30:00" /></Row>
              <Row $mt={3} $pl={13}><Caption $w={108} htmlFor="et"><u>E</u>nd Time:</Caption><Box id="et" $w={104} defaultValue="16:30:00" /></Row>
              <Row $mt={3} $pl={13}><Check text="Use Evening Session" on /></Row>
              <Row $mt={3} $pl={13}><Caption $w={108} htmlFor="es">Evening Start</Caption><Box id="es" $w={104} defaultValue="16:30:00" /></Row>
              <Row $mt={4} $pl={13}><Caption $w={108} htmlFor="ee">Evening End Time:</Caption><Box id="ee" $w={104} defaultValue="09:29:59" /></Row>
              <Row $mt={6} $pl={13}><Check text="New Bar At Session Start" on /></Row>
              <Row $mt={3} $pl={13}><Combo w={213} value="Load All Weekend Data" label="Weekend data" /></Row>
            </FieldSet>
            <Row $mt={4} $pl={14}><Check text="Automatically Rollover Futures Symbol" /></Row>
            <Row $mt={3} $pl={14}><Check text="Save Days to Load, Intraday Bar Period, Graph Draw Type as Default" /></Row>
          </Column>

          <Column>
            <FieldSet $h={125} $mt={2}>
              <legend>Historical Chart Bar Period:</legend>
              <History>
                <RadioStack>
                  <Radio name="hist" text="Days:" on off />
                  <Radio name="hist" text="Weekly" off />
                  <Radio name="hist" text="Monthly" off />
                  <Radio name="hist" text="Quarterly" off />
                  <Radio name="hist" text="Yearly" off />
                </RadioStack>
                <Box aria-label="Days per bar" $w={84} disabled defaultValue="1" />
              </History>
            </FieldSet>
            <Row $mt={10}><Caption htmlFor="draw"><u>G</u>raph Draw Type:</Caption></Row>
            <ListFrame>
              <select id="draw" size={6} defaultValue="Candlestick Bars Hollow">
                <option>OHLC Bars</option>
                <option>Candlestick Bars</option>
                <option>Candlestick Body Only</option>
                <option>Candlestick Bars Hollow</option>
                <option>Line on Close</option>
                <option>Mountain</option>
              </select>
              <ScrollTrack>
                <svg width="9" viewBox="0 0 9 17" stroke="#505050" strokeWidth="2" fill="none"><path d="M1 11l3.5-4L8 11" /></svg>
                <i />
                <svg width="9" viewBox="0 0 9 17" stroke="#505050" strokeWidth="2" fill="none"><path d="M1 6l3.5 4L8 6" /></svg>
              </ScrollTrack>
            </ListFrame>
            <Row $mt={6}><Button $w={81}>S<u>c</u>ale</Button></Row>
            <Row $mt={11} $pl={2}><Button $w={182}>Apply Global Symbol Settings</Button></Row>
            <Row $mt={6} $pl={2}><Button $w={182}>Edit Global Symbol Settings</Button></Row>
          </Column>
        </TabPanel>
        <Row $mt={3} $gap={7}>
          <Button $w={86} $main>OK</Button>
          <Button $w={86}>Cancel</Button>
          <Button $w={86}>Apply</Button>
          <Button $w={86}>Help</Button>
        </Row>
      </DialogBody>
      <Pointer width="13" height="21" viewBox="0 0 13 21" fill="#fff" stroke="#000">
        <path d="M.5.5v16l4-3.8 2.7 6.8 2.5-1-2.7-6.5h5z" />
      </Pointer>
    </Dialog>
  );
}

export default function App() {
  return (
    <>
      <GlobalStyle />
      <Desktop>
        <Chart />
        <Trade />
        <Settings />
      </Desktop>
    </>
  );
}
